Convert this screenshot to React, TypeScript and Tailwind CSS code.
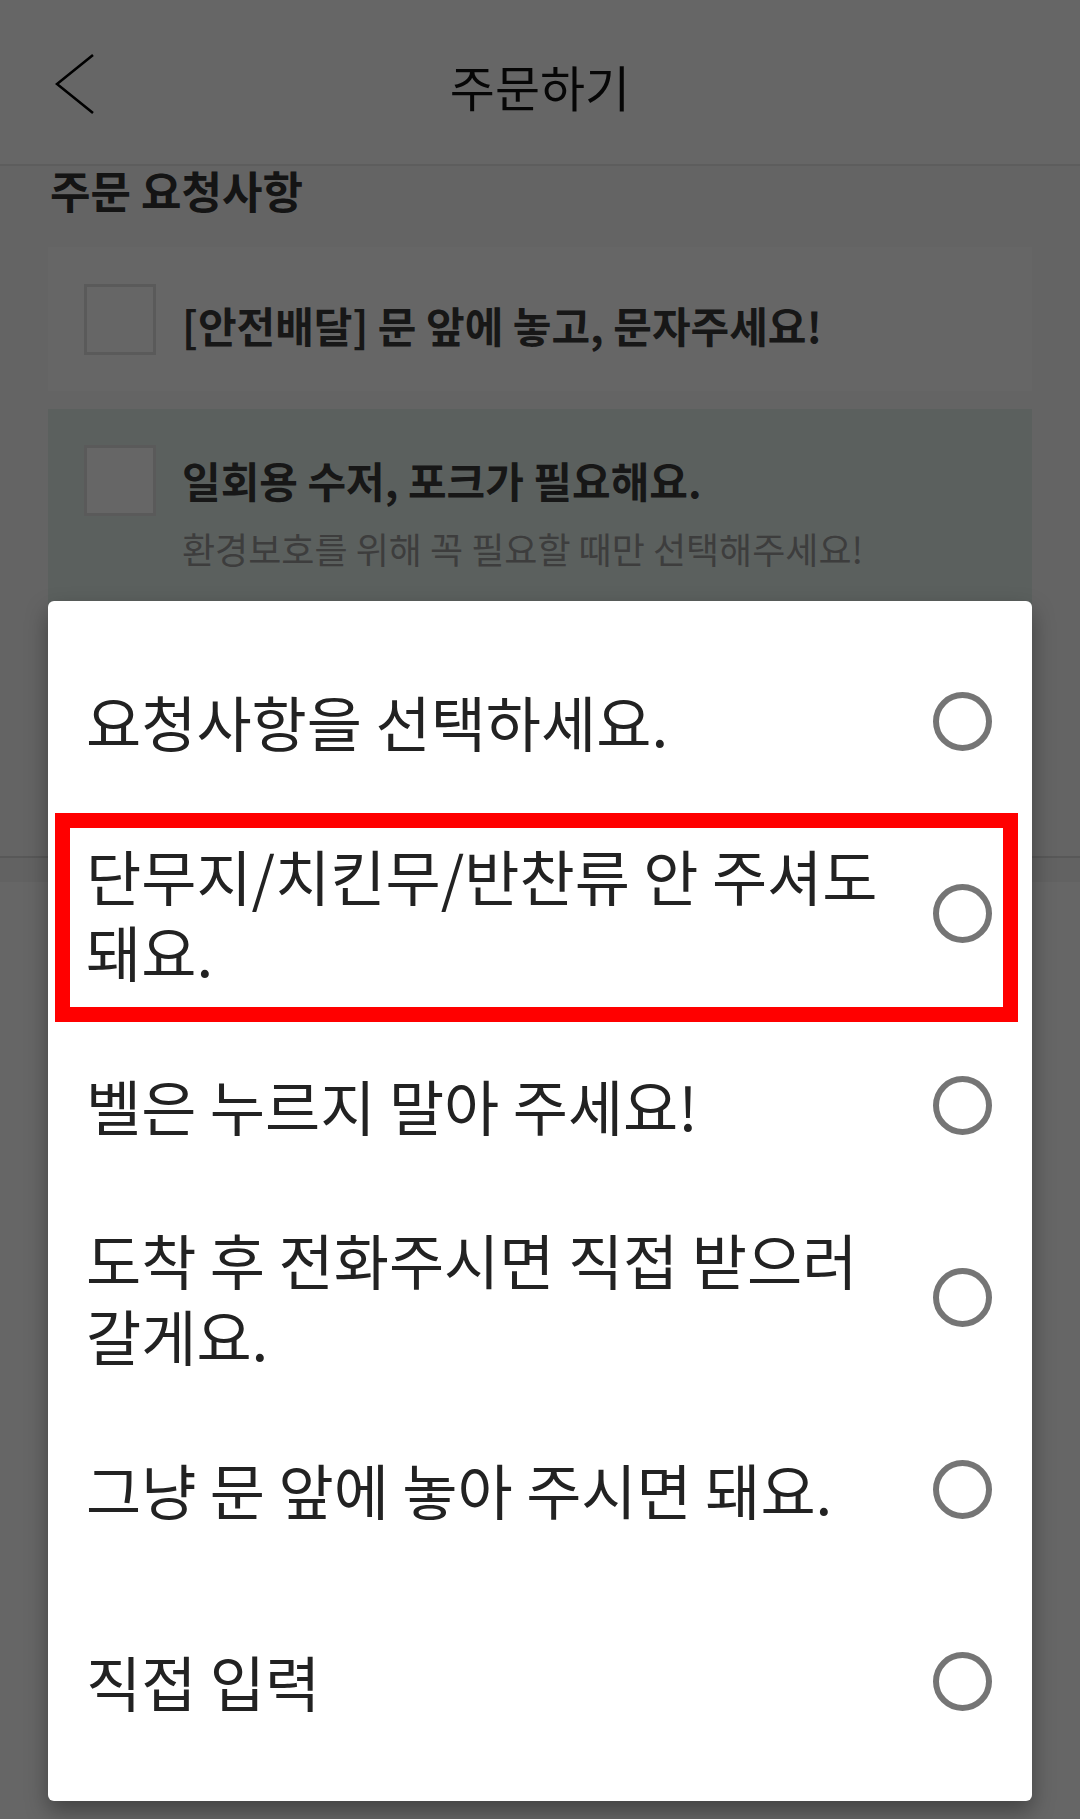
import React from "react";

const options = [
  "요청사항을 선택하세요.",
  "단무지/치킨무/반찬류 안 주셔도 돼요.",
  "벨은 누르지 말아 주세요!",
  "도착 후 전화주시면 직접 받으러 갈게요.",
  "그냥 문 앞에 놓아 주시면 돼요.",
  "직접 입력",
];

const Checkbox = () => (
  <div className="h-[71px] w-[72px] shrink-0 border-[3px] border-[#e0e0e0] bg-white" />
);

const App: React.FC = () => {
  return (
    <div className="relative h-[1819px] w-[1080px] overflow-hidden bg-[#fafafa] font-['Noto_Sans_CJK_KR',sans-serif]">
      {/* page behind the sheet */}
      <header className="relative flex h-[166px] items-center justify-center border-b-2 border-[#e8e8e8] bg-white">
        <svg
          className="absolute left-[55px] top-[53px]"
          width="40"
          height="62"
          viewBox="0 0 40 62"
          fill="none"
        >
          <polyline points="38,2 2,31 38,60" stroke="#000" strokeWidth="2.6" />
        </svg>
        <h1 className="mt-[8px] text-[49px] font-normal text-[#111]">주문하기</h1>
      </header>

      <h2 className="pl-[50px] text-[44px] font-bold leading-[48px] text-[#333]">
        주문 요청사항
      </h2>

      <div className="mx-[48px] mt-[33px] flex h-[144px] items-center gap-[26px] bg-white pl-[36px]">
        <Checkbox />
        <span className="mt-[10px] text-[42px] font-bold text-[#3a3a3a]">
          [안전배달] 문 앞에 놓고, 문자주세요!
        </span>
      </div>

      <div className="mx-[48px] mt-[18px] flex h-[240px] gap-[26px] bg-[#e4f0eb] pl-[36px] pt-[36px]">
        <Checkbox />
        <div className="flex flex-col">
          <span className="mt-[10px] text-[42px] font-bold leading-[50px] text-[#3a3a3a]">
            일회용 수저, 포크가 필요해요.
          </span>
          <span className="mt-[21px] text-[36px] leading-[44px] text-[#999]">
            환경보호를 위해 꼭 필요할 때만 선택해주세요!
          </span>
        </div>
      </div>

      <div className="mt-[207px] h-[26px] border-t-2 border-[#dcdcdc] bg-[#f5f5f5]" />
      <div className="h-[940px] bg-white" />

      {/* dim */}
      <div className="absolute inset-0 bg-black/60" />

      {/* option sheet */}
      <div className="absolute left-[48px] top-[601px] w-[984px] rounded-[6px] bg-white py-[24px] shadow-[0_10px_22px_rgba(0,0,0,0.35)]">
        {options.map((label, i) => (
          <div key={label} className="relative flex h-[192px] items-center pl-[38px] pr-[40px]">
            <span className="flex-1 break-keep pr-[24px] text-[60px] leading-[76px] text-[#222]">
              {label}
            </span>
            <span className="h-[59px] w-[59px] shrink-0 rounded-full border-[6px] border-[#757575]" />
            {i === 1 && (
              <div className="absolute left-[7px] right-[14px] top-[-4px] h-[209px] border-[15px] border-[#ff0000]" />
            )}
          </div>
        ))}
      </div>
    </div>
  );
};

export default App;
